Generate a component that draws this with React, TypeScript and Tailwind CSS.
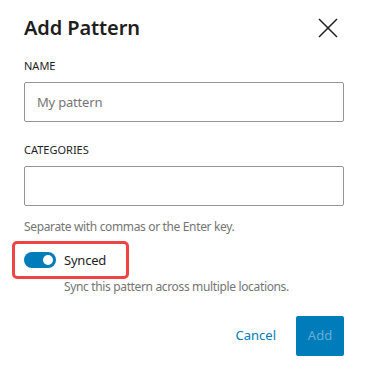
import { useState } from "react"

export default function App() {
  const [synced, setSynced] = useState(true)

  return (
    <div className="w-[370px] h-[370px] bg-white text-[#1e1e1e] font-['Noto_Sans',sans-serif] flex flex-col pl-6 pr-[26px]">
      <div className="h-[56px] flex items-center justify-between">
        <h1 className="text-[20px] font-semibold leading-[28px] tracking-[-0.1px]">Add Pattern</h1>
        <button className="mr-[6px] w-5 h-5 flex items-center justify-center" aria-label="Close">
          <svg width="20" height="20" viewBox="0 0 20 20" fill="none">
            <path d="M1 1L19 19M19 1L1 19" stroke="#1e1e1e" strokeWidth="1.5" />
          </svg>
        </button>
      </div>

      <label className="mt-[2px] text-[11px] font-normal uppercase leading-[16px]">Name</label>
      <input
        placeholder="My pattern"
        className="mt-2 h-10 w-full border border-[#949494] rounded-[2px] px-3 text-[13px] tracking-[-0.2px] placeholder:text-[#757575] outline-none"
      />

      <label className="mt-5 text-[11px] font-normal uppercase leading-[16px]">Categories</label>
      <input className="mt-2 h-10 w-full border border-[#949494] rounded-[2px] px-3 text-[13px] outline-none" />
      <p className="mt-[13px] text-[12px] leading-[16px] tracking-[-0.35px] text-[#757575]">Separate with commas or the Enter key.</p>

      <div className="mt-[6px] -ml-3 w-[117px] h-[38px] border-[3px] border-[#ef4444] rounded-[5px] flex items-center pl-[9px] gap-2">
        <button
          onClick={() => setSynced(!synced)}
          className={`w-8 h-4 rounded-full flex items-center px-[3px] ${synced ? "bg-[#007cba] justify-end" : "bg-[#949494] justify-start"}`}
        >
          <span className="w-[10px] h-[10px] rounded-full bg-white" />
        </button>
        <span className="text-[13px] leading-[16px] tracking-[-0.2px]">Synced</span>
      </div>
      <p className="ml-10 text-[12px] leading-[16px] tracking-[-0.35px] text-[#757575]">Sync this pattern across multiple locations.</p>

      <div className="mt-[21px] flex justify-end items-center gap-2">
        <button className="h-10 px-3 text-[13px] text-[#007cba]">Cancel</button>
        <button disabled className="h-10 w-12 rounded-[2px] bg-[#007cba] text-[13px] text-white/40">Add</button>
      </div>
    </div>
  )
}
